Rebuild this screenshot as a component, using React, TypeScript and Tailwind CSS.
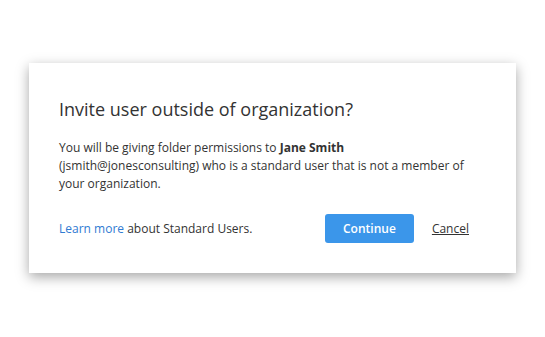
import React from 'react';

export default function App() {
    return (
        <div className="w-[545px] h-[337px] bg-white pt-[63px] pl-[29px]" style={{ fontFamily: '"Open Sans", sans-serif' }}>
            {/* Dialog */}
            <div className="w-[487px] h-[210px] bg-white shadow-[0_4px_12px_rgba(0,0,0,0.35)] pt-[32px] px-[30px] text-[#333]">
                <h2 className="text-[18px] leading-[28px] font-normal text-[#333]">Invite user outside of organization?</h2>
                <p className="mt-[16px] text-[12px] leading-[18px]">
                    You will be giving folder permissions to <span className="font-bold">Jane Smith</span> (jsmith@jonesconsulting) who is a standard user that is not a member of your organization.
                </p>

                {/* Footer */}
                <div className="mt-[21px] flex items-center pr-[17px]">
                    <div className="text-[12px]">
                        <a className="text-[#2f7bd2]">Learn more</a> about Standard Users.
                    </div>
                    <button className="ml-auto w-[89px] h-[29px] rounded-[3px] bg-[#3b96ea] text-white text-[12px] font-semibold">Continue</button>
                    <a className="ml-[18px] text-[12px] underline text-[#333]">Cancel</a>
                </div>
            </div>
        </div>
    );
}
